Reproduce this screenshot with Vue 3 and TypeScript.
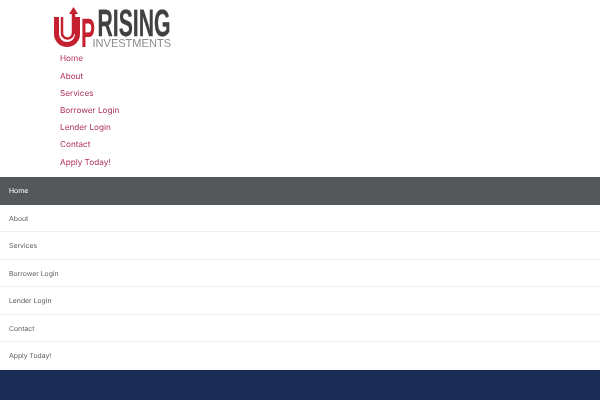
<script setup lang="ts">
const links: string[] = ['Home', 'About', 'Services', 'Borrower Login', 'Lender Login', 'Contact', 'Apply Today!']
</script>

<template>
  <div class="page">
    <header class="top">
      <svg class="logo" width="122" height="58" viewBox="53 0 122 58">
        <path class="red-line" d="M56.500 17V34a10.500 10.500 0 0 0 21 0V17" />
        <path class="red-thin" d="M62 17V33a5.500 5.500 0 0 0 11 0" />
        <path class="stem" d="M73.500 14V34" />
        <path class="red" d="M73.500 7l4.500 7h-9z" />
        <text class="up" x="81" y="46.500" textLength="14" lengthAdjust="spacingAndGlyphs">P</text>
        <text class="rising" x="97.500" y="36" textLength="73" lengthAdjust="spacingAndGlyphs">RISING</text>
        <text class="inv" x="92.500" y="47" textLength="78.500" lengthAdjust="spacingAndGlyphs">INVESTMENTS</text>
      </svg>
      <ul class="menu">
        <li v-for="l in links" :key="l">{{ l }}</li>
      </ul>
    </header>
    <nav class="mobile">
      <a v-for="(l, i) in links" :key="l" class="row" :class="{ active: i === 0 }">{{ l }}</a>
    </nav>
    <div class="band"></div>
  </div>
</template>

<style scoped>
.page {
  width: 600px;
  height: 400px;
  overflow: hidden;
  background: #fff;
  font-family: Inter, "Liberation Sans", sans-serif;
  text-rendering: geometricPrecision;
  filter: blur(0.4px);
}
.top {
  height: 177px;
  box-sizing: border-box;
  padding: 0 0 0 53px;
}
.logo {
  display: block;
  margin-bottom: -8px;
}
.red {
  fill: #c4202f;
}
.red-line {
  fill: none;
  stroke: #c4202f;
  stroke-width: 5;
}
.red-thin {
  fill: none;
  stroke: #c4202f;
  stroke-width: 2.500;
}
.stem {
  fill: none;
  stroke: #c4202f;
  stroke-width: 3.500;
}
.up {
  font-family: "Liberation Sans", sans-serif;
  font-weight: 700;
  font-size: 41px;
  fill: #c4202f;
}
.rising {
  font-family: "Liberation Sans", sans-serif;
  font-weight: 700;
  font-size: 38px;
  fill: #414042;
  stroke: #414042;
  stroke-width: 0.3;
}
.inv {
  font-family: "Liberation Sans", sans-serif;
  font-size: 11.500px;
  fill: #8a8c8f;
}
.menu {
  list-style: none;
  margin: 0;
  padding: 0.400px 0 0 7px;
  font-size: 8.200px;
  color: #b03060;
}
.menu li {
  height: 17.200px;
  line-height: 17.200px;
}
.mobile {
  display: flex;
  flex-direction: column;
}
.row {
  height: 27.570px;
  box-sizing: border-box;
  padding-left: 9px;
  font-size: 6.850px;
  line-height: 27.500px;
  color: #5c5c5c;
  border-bottom: 1px solid #efefef;
}
.row:last-child {
  border-bottom: 0;
}
.row.active {
  background: #54585a;
  color: #fff;
  border-bottom: 0;
}
.band {
  height: 30px;
  background: #1c2d55;
}
</style>
